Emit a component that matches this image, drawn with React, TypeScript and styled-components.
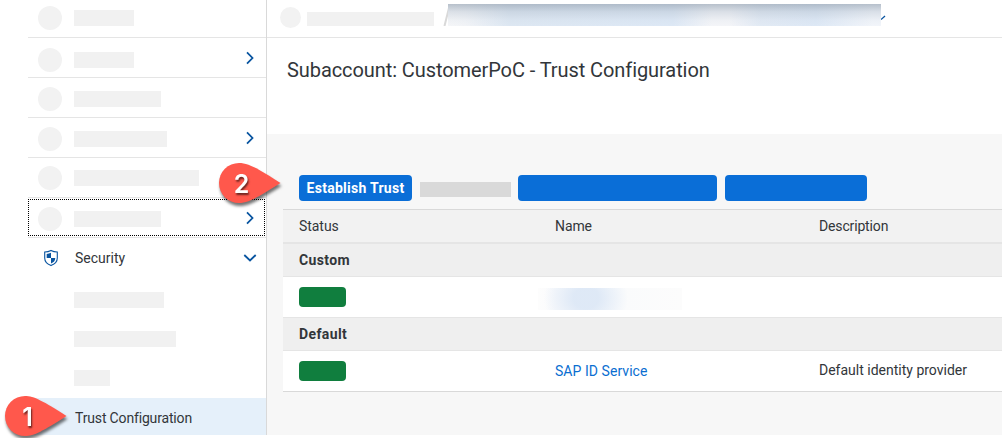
import React from "react";
import styled, { createGlobalStyle } from "styled-components";

const Global = createGlobalStyle`
  * { box-sizing: border-box; }
  body { margin: 0; background: #fff; overflow: hidden; font-family: Roboto, "Noto Sans", sans-serif; font-size: 14px; color: #32363a; }
`;

const Page = styled.div`
  position: relative;
  display: flex;
  width: 1002px;
  height: 438px;
  padding-bottom: 3px;
  overflow: hidden;
`;

const Sidebar = styled.nav`
  width: 267px;
  flex: none;
  padding-left: 28px;
  border-right: 1px solid #d9d9d9;
`;

const NavRow = styled.div<{ $h?: number; $pad: number }>`
  position: relative;
  display: flex;
  align-items: flex-start;
  height: ${(p) => p.$h ?? 40}px;
  padding: ${(p) => p.$pad}px 11px 0 10px;
  border-bottom: 1px solid #e5e5e5;
`;

const FocusRing = styled.div`
  position: absolute;
  inset: 1px 1px 1px 0;
  border: 1px dotted #000;
`;

const Dot = styled.span<{ $size: number }>`
  width: ${(p) => p.$size}px;
  height: ${(p) => p.$size}px;
  border-radius: 50%;
  background: #f2f2f2;
  flex: none;
`;

const Bar = styled.span<{ $w: number; $h?: number; $tone?: string }>`
  width: ${(p) => p.$w}px;
  height: ${(p) => p.$h ?? 16}px;
  background: ${(p) => p.$tone ?? "#f1f1f1"};
  flex: none;
`;

const NavBar = styled(Bar)`
  margin: 4px 0 0 12px;
`;

const ChevronSlot = styled.span<{ $pad: number }>`
  display: flex;
  margin-left: auto;
  margin-top: ${(p) => 13 - p.$pad}px;
`;

const GroupRow = styled.div`
  display: flex;
  align-items: center;
  height: 40px;
  padding: 0 9px 0 15px;
`;

const GroupLabel = styled.span`
  margin: 0 auto 0 16px;
`;

const SubRow = styled.div<{ $pad: number }>`
  display: flex;
  height: 40px;
  padding: ${(p) => p.$pad}px 0 0 46px;
`;

const SelectedRow = styled.div`
  display: flex;
  align-items: center;
  height: 37px;
  padding: 3px 0 0 47px;
  background: #e5f0fa;
`;

const SelectedLabel = styled.span`
  letter-spacing: -0.16px;
`;

const Main = styled.main`
  flex: 1;
  display: flex;
  flex-direction: column;
  min-width: 0;
`;

const TopBar = styled.header`
  display: flex;
  height: 38px;
  padding: 4px 0 0 13px;
  border-bottom: 1px solid #e5e5e5;
`;

const CrumbDot = styled(Dot)`
  margin-top: 3px;
`;

const CrumbBar = styled(Bar)`
  margin: 8px 9px 0 6px;
`;

const Redacted = styled.div`
  width: 433px;
  height: 22px;
  margin-left: -1px;
  background:
    linear-gradient(180deg, rgba(150, 163, 178, 0.65), rgba(170, 183, 198, 0.35) 35%, rgba(190, 203, 218, 0.1) 75%, rgba(200, 210, 222, 0)),
    linear-gradient(90deg, #f5f6f8 0, #f2f4f7 4%, #dde7f2 14%, #dde8f5 52%, #f4f5f8 61%, #f4f5f8 65%, #e2eaf4 72%, #dde8f5 85%, #f2f5fa 98%);
`;

const TitleArea = styled.section`
  height: 96px;
  padding: 19px 20px 0;
`;

const Title = styled.h1`
  margin: 0;
  font-size: 20px;
  line-height: 26px;
  font-weight: 400;
  letter-spacing: -0.08px;
`;

const Content = styled.section`
  flex: 1;
  background: #f7f7f7;
  padding: 41px 0 0 16px;
`;

const Toolbar = styled.div`
  display: flex;
  align-items: center;
  height: 26px;
  padding-left: 16px;
  margin-bottom: 8px;
`;

const Button = styled.button<{ $w: number }>`
  width: ${(p) => p.$w}px;
  height: 26px;
  padding: 0;
  border: 0;
  border-radius: 4px;
  background: #0a6ed7;
  color: #fff;
  font: 700 14px/26px Roboto, sans-serif;
  letter-spacing: 0.27px;
  white-space: nowrap;
`;

const ToolbarBar = styled(Bar)`
  margin: 2px 7px 0 8px;
`;

const SecondButton = styled(Button)`
  margin-right: 8px;
`;

const Table = styled.div`
  border-top: 1px solid #d9d9d9;
  border-bottom: 1px solid #d9d9d9;
`;

const Row = styled.div<{ $kind: "head" | "group" | "data"; $last?: boolean }>`
  display: grid;
  grid-template-columns: 256px 264px 1fr;
  align-items: center;
  padding-left: 16px;
  height: ${(p) => (p.$kind === "head" ? 34 : p.$kind === "group" ? 33 : p.$last ? 40 : 41)}px;
  background: ${(p) => (p.$kind === "head" ? "#f2f2f2" : p.$kind === "group" ? "#efefef" : "#fff")};
  border-bottom: ${(p) => (p.$last ? 0 : p.$kind === "head" ? 2 : 1)}px solid #e5e5e5;
  font-weight: ${(p) => (p.$kind === "group" ? 700 : 400)};
`;

const Cell = styled.span<{ $track?: number; $raise?: number }>`
  letter-spacing: ${(p) => p.$track ?? 0}px;
  padding-bottom: ${(p) => p.$raise ?? 0}px;
  white-space: nowrap;
`;

const Status = styled.span`
  width: 47px;
  height: 20px;
  border-radius: 4px;
  background: #107e3e;
`;

const Link = styled.a`
  color: #0a6ed1;
`;

const RedactedName = styled.span`
  width: 144px;
  height: 22px;
  margin: 3px 0 0 -17px;
  background:
    radial-gradient(ellipse 42px 36px at 48px 10px, rgba(221, 232, 246, 0.95) 30%, rgba(221, 232, 246, 0) 100%),
    linear-gradient(90deg, #fdfdfd, #f9fafc 12%, #fafbfc 60%, #fcfcfc);
`;

const PinBox = styled.svg<{ $x: number; $y: number }>`
  position: absolute;
  left: ${(p) => p.$x}px;
  top: ${(p) => p.$y}px;
  overflow: visible;
  filter: drop-shadow(1px 3px 1.5px rgba(0, 0, 0, 0.55));
`;

const PinText = styled.text`
  font: 600 25px Inter, "Liberation Sans", sans-serif;
  fill: #fff;
  text-shadow: 1px 2px 2px rgba(0, 0, 0, 0.6);
`;

const Pin = ({ x, y, label }: { x: number; y: number; label: string }) => (
  <PinBox $x={x} $y={y} width="62" height="40" viewBox="0 0 62 40">
    <path d="M20 0C29 0 38 5 61.500 20C38 35 29 40 20 40A20 20 0 0 1 20 0Z" fill="#ff584c" />
    <PinText x="22.500" y="30" textAnchor="middle">{label}</PinText>
  </PinBox>
);

const ChevronRight = () => (
  <svg width="10" height="14" viewBox="0 0 10 14" fill="none" stroke="#0854a0" strokeWidth="1.800">
    <path d="M2 1.300L7.500 7L2 12.700" />
  </svg>
);

const ChevronDown = () => (
  <svg width="14" height="10" viewBox="0 0 14 10" fill="none" stroke="#0854a0" strokeWidth="1.800">
    <path d="M1.300 2L7 7.500L12.700 2" />
  </svg>
);

const Shield = () => (
  <svg width="16" height="18" viewBox="0 0 16 18">
    <path d="M8 1.500C6 2.600 4 3 1.700 3V9C1.700 13 4.500 15.200 8 16.600C11.500 15.200 14.300 13 14.300 9V3C12 3 10 2.600 8 1.500Z" fill="#fff" stroke="#0854a0" strokeWidth="1.100" />
    <path d="M8 3.800V9H3.700V4.900C5.200 4.700 6.700 4.400 8 3.800ZM8 9H12.300C12.200 11.800 10.500 13.500 8 14.500Z" fill="#0854a0" />
  </svg>
);

const Slash = () => (
  <svg width="6" height="22" viewBox="0 0 6 22">
    <path d="M1.500 22L6 4" stroke="#d9d9d9" strokeWidth="2" />
  </svg>
);

const CrumbChevron = () => (
  <svg width="5" height="22" viewBox="0 0 5 22">
    <path d="M0 15.500L4 12" stroke="#0854a0" strokeWidth="1.300" />
  </svg>
);

const navItems = [
  { h: 38, pad: 6, w: 60 },
  { pad: 10, w: 60, arrow: true },
  { pad: 9, w: 87 },
  { pad: 9, w: 93, arrow: true },
  { pad: 8, w: 125 },
  { pad: 9, w: 87, arrow: true, focus: true },
];

const subItems = [
  { pad: 14, w: 90 },
  { pad: 13, w: 102 },
  { pad: 12, w: 36 },
];

export default function App() {
  return (
    <Page>
      <Global />
      <Sidebar>
        {navItems.map((n, i) => (
          <NavRow key={i} $h={n.h} $pad={n.pad}>
            <Dot $size={24} />
            <NavBar $w={n.w} />
            {n.arrow && <ChevronSlot $pad={n.pad}><ChevronRight /></ChevronSlot>}
            {n.focus && <FocusRing />}
          </NavRow>
        ))}
        <GroupRow>
          <Shield />
          <GroupLabel>Security</GroupLabel>
          <ChevronDown />
        </GroupRow>
        {subItems.map((s, i) => (
          <SubRow key={i} $pad={s.pad}><Bar $w={s.w} /></SubRow>
        ))}
        <SelectedRow><SelectedLabel>Trust Configuration</SelectedLabel></SelectedRow>
      </Sidebar>
      <Main>
        <TopBar>
          <CrumbDot $size={21} />
          <CrumbBar $w={127} $h={14} />
          <Slash />
          <Redacted />
          <CrumbChevron />
        </TopBar>
        <TitleArea><Title>Subaccount: CustomerPoC - Trust Configuration</Title></TitleArea>
        <Content>
          <Toolbar>
            <Button $w={113}>Establish Trust</Button>
            <ToolbarBar $w={91} $h={15} $tone="#d9d9d9" />
            <SecondButton $w={199} />
            <Button $w={142} />
          </Toolbar>
          <Table>
            <Row $kind="head"><Cell $track={-0.05}>Status</Cell><Cell $track={-0.1}>Name</Cell><Cell $track={-0.15}>Description</Cell></Row>
            <Row $kind="group"><Cell $track={0.35}>Custom</Cell></Row>
            <Row $kind="data"><Status /><RedactedName /></Row>
            <Row $kind="group"><Cell $track={0.4}>Default</Cell></Row>
            <Row $kind="data" $last><Status /><Cell $track={0.05}><Link>SAP ID Service</Link></Cell><Cell $raise={2}>Default identity provider</Cell></Row>
          </Table>
        </Content>
      </Main>
      <Pin x={219} y={163} label="2" />
      <Pin x={5} y={396} label="1" />
    </Page>
  );
}
